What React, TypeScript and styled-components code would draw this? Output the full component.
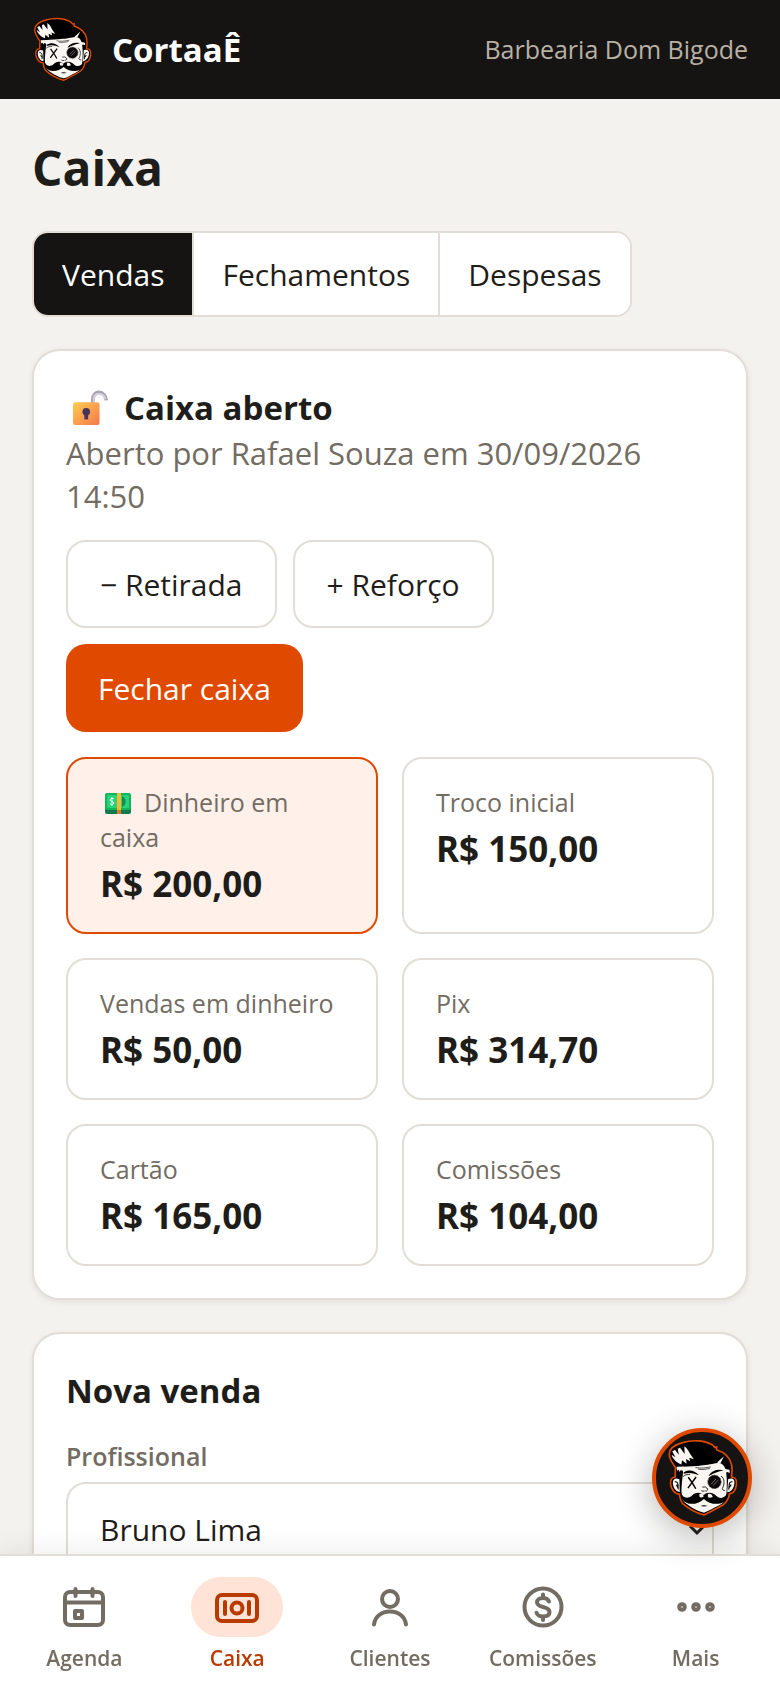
import React, { useState } from "react";
import styled, { createGlobalStyle, css } from "styled-components";

const colors = {
    bg: "#f4f2ee",
    dark: "#161412",
    text: "#1f1d19",
    muted: "#726c62",
    line: "#e2ddd7",
    accent: "#e04a00",
    accentDark: "#b83a00",
    accentSoft: "#ffe3d6",
    accentPale: "#fff0ea",
};

const tabs = ["Vendas", "Fechamentos", "Despesas"];

const stats = [
    { label: "Dinheiro em caixa", value: "R$ 200,00", cash: true },
    { label: "Troco inicial", value: "R$ 150,00" },
    { label: "Vendas em dinheiro", value: "R$ 50,00" },
    { label: "Pix", value: "R$ 314,70" },
    { label: "Cartão", value: "R$ 165,00" },
    { label: "Comissões", value: "R$ 104,00" },
];

const Face = () => (
    <svg viewBox="124 112 220 236" aria-hidden="true">
        <path
            d="M134 158C135 140 152 129 175 123C202 115 238 115 262 128C268 131 270 134 273 138L279 136L278 145C300 152 319 168 324 190C327 202 326 216 324 228C337 228 341 238 339 252C337 267 329 278 318 279C316 293 312 302 300 312C282 323 264 332 240 344C218 338 192 324 176 310C168 302 166 291 165 280C150 280 140 265 138 250C137 238 142 229 152 228L153 200C148 190 134 178 134 158Z"
            fill="#000"
            stroke={colors.accent}
            strokeWidth="5"
            strokeLinejoin="round"
        />
        {/* ears */}
        <path d="M165 235C151 229 144 236 145 248C147 264 155 273 166 274Z" fill="#faf7f2" />
        <path d="M314 234C328 229 335 236 333 248C331 264 323 273 311 275Z" fill="#faf7f2" />
        <path d="M151 243C159 241 162 246 161 266M156 252L160 260M327 243C319 241 316 247 316 267M323 251L318 260" fill="none" stroke="#000" strokeWidth="3.5" />
        {/* face */}
        <path d="M174 197C195 194 214 196 237 192C257 190 276 185 285 185C300 186 306 200 308 214C311 240 310 266 308 287C306 301 298 309 284 316C269 323 254 333 240 337C222 333 199 320 185 309C175 302 173 293 172 281C170 264 174 234 176 214Z" fill="#faf7f2" />
        <path d="M156 197L178 196L175 210L169 207L166 213L163 206L158 209ZM301 203L318 206L319 216L311 213L303 217ZM280 184L301 165L290 187Z" fill="#faf7f2" />
        {/* hair highlights */}
        <path d="M143 150L151 145L163 160L160 142L167 139L181 158L180 134C188 138 194 150 198 158L209 174L195 169L198 180L185 173L187 188L173 177L171 190C156 184 144 172 141 160L153 168Z" fill="#faf7f2" />
        <path d="M214 199C230 203 245 200 261 197M222 204C235 207 246 204 258 202" fill="none" stroke="#000" strokeWidth="2" />
        {/* brows and eyes */}
        <path d="M178 214C193 204 211 207 225 223C211 216 194 213 178 218ZM255 223C264 209 280 203 300 208C284 211 270 216 255 225Z" />
        <path d="M192 229Q204 244 215 264M216 228Q202 247 191 262" fill="none" stroke="#000" strokeWidth="4.5" />
        <path d="M176 227C180 221 191 220 198 220M292 225C303 232 304 249 296 264Q298 271 304 269" fill="none" stroke="#000" strokeWidth="2.5" />
        <circle cx="272" cy="243" r="20" fill="#0c0b0a" />
        <circle cx="272" cy="243" r="20" fill="none" stroke="#000" strokeWidth="3" strokeDasharray="3 2" />
        <path d="M262 250L277 234M268 254L283 238" stroke="#aaa7a2" strokeWidth="1.8" />
        {/* nose and moustache */}
        <path d="M232 270Q237 273 242 271M250 262C253 267 250 272 244 271M235 259Q246 256 250 263" fill="none" stroke="#000" strokeWidth="2.5" />
        <path d="M171 277C174 291 189 296 202 286C213 274 228 273 239 283C251 273 266 274 278 286C290 297 306 292 311 277C314 294 304 309 283 310C265 311 252 306 240 295C227 306 214 311 199 310C179 308 168 294 171 277Z" />
        <path d="M226 280Q237 275 239 288Q231 294 226 288ZM252 280Q263 276 267 289Q258 293 252 290Z" fill="#faf7f2" />
        <path d="M229 317Q240 312 251 317Q240 320 229 317Z" />
    </svg>
);

const PadlockIcon = () => (
    <svg viewBox="0 0 40 40" aria-hidden="true">
        <defs>
            <linearGradient id="lockBody" x1="0" y1="0" x2="1" y2="1">
                <stop offset="0" stopColor="#ffcd4d" />
                <stop offset="1" stopColor="#f5774f" />
            </linearGradient>
        </defs>
        <path d="M22 15V11C22 1 35 1 36 12" fill="none" stroke="#aaa3b2" strokeWidth="4" />
        <path d="M23 14V10C24 3 34 4 35 11" fill="none" stroke="#d6d0df" strokeWidth="2" />
        <rect x="1" y="14" width="28" height="24" rx="3" fill="url(#lockBody)" />
        <circle cx="15" cy="24" r="4" fill="#46345c" />
        <path d="M13 25H17L17 32H13Z" fill="#46345c" />
    </svg>
);

const CashIcon = () => (
    <svg viewBox="0 0 32 32" aria-hidden="true">
        <rect x="3" y="8" width="26" height="18" rx="2" fill="#127a4c" />
        <rect x="3" y="5" width="26" height="17" rx="2" fill="#13b45c" />
        <rect x="5" y="7" width="22" height="13" rx="1" fill="#25d47a" />
        <path d="M20 8A6 6 0 0 1 20 19Z" fill="#138b53" />
        <path d="M12 10.5Q8 9.500 8 12Q8 13 10 13.500Q12 14 12 15Q11 17.500 8 16M10 9V18" fill="none" stroke="#e8fff1" strokeWidth="1" />
        <rect x="15" y="5" width="4" height="17" fill="#ffb82e" />
        <rect x="15" y="22" width="4" height="4" fill="#d97b2c" />
    </svg>
);

const AgendaIcon = () => (
    <NavSvg>
        <rect x="5" y="9" width="38" height="33" rx="5" />
        <path d="M5 19.500H43M15.500 6V13M32.500 6V13" />
        <rect x="15" y="28" width="7" height="7" />
    </NavSvg>
);

const CaixaIcon = () => (
    <NavSvg>
        <rect x="4" y="12" width="40" height="26" rx="5" />
        <circle cx="24" cy="25" r="5.500" />
        <path d="M12 19V31M36 19V31" />
    </NavSvg>
);

const ClientesIcon = () => (
    <NavSvg>
        <circle cx="24" cy="16" r="8" />
        <path d="M8 41.500C9 33.500 15.500 28.500 24 28.500S39 33.500 40 41.500" />
    </NavSvg>
);

const ComissoesIcon = () => (
    <NavSvg>
        <circle cx="24" cy="24" r="18.500" />
        <path d="M30 18.500C29 16 27 15 24 15C20 15 18 17 18 19.300C18 22.500 21 23.300 24 24C27 24.700 30.500 25.800 30.500 29C30.500 32 28 33.500 24 33.500C21 33.500 18 32 17.500 29.700M24 11.500V15M24 33.500V37" />
    </NavSvg>
);

const MaisIcon = () => (
    <NavSvg>
        <circle cx="10" cy="24" r="2.800" />
        <circle cx="24" cy="24" r="2.800" />
        <circle cx="38" cy="24" r="2.800" />
    </NavSvg>
);

const navItems = [
    { label: "Agenda", icon: AgendaIcon },
    { label: "Caixa", icon: CaixaIcon, active: true },
    { label: "Clientes", icon: ClientesIcon },
    { label: "Comissões", icon: ComissoesIcon },
    { label: "Mais", icon: MaisIcon },
];

export default function App() {
    const [tab, setTab] = useState("Vendas");

    return (
        <>
            <GlobalStyle />
            <Header>
                <Logo>
                    <Face />
                </Logo>
                <Brand>CortaaÊ</Brand>
                <ShopName>Barbearia Dom Bigode</ShopName>
            </Header>

            <Main>
                <PageTitle>Caixa</PageTitle>
                <Tabs>
                    {tabs.map((name) => (
                        <Tab key={name} type="button" $active={tab === name} onClick={() => setTab(name)}>
                            {name}
                        </Tab>
                    ))}
                </Tabs>

                <Card>
                    <CardTitle>
                        <TitleIcon>
                            <PadlockIcon />
                        </TitleIcon>
                        Caixa aberto
                    </CardTitle>
                    <OpenedBy>Aberto por Rafael Souza em 30/09/2026 14:50</OpenedBy>
                    <Actions>
                        <Button type="button">− Retirada</Button>
                        <Button type="button">+ Reforço</Button>
                        <Button type="button" $primary>
                            Fechar caixa
                        </Button>
                    </Actions>
                    <Stats>
                        {stats.map((item) => (
                            <Stat key={item.label} $highlight={item.cash}>
                                <StatLabel>
                                    {item.cash && (
                                        <LabelIcon>
                                            <CashIcon />
                                        </LabelIcon>
                                    )}
                                    {item.label}
                                </StatLabel>
                                <StatValue>{item.value}</StatValue>
                            </Stat>
                        ))}
                    </Stats>
                </Card>

                <Card>
                    <CardTitle>Nova venda</CardTitle>
                    <Field>
                        <Label htmlFor="profissional">Profissional</Label>
                        <SelectBox>
                            <Select id="profissional">
                                <option>Bruno Lima</option>
                            </Select>
                            <Chevron viewBox="0 0 18 12" aria-hidden="true">
                                <path d="M2 2L9 9L16 2" />
                            </Chevron>
                        </SelectBox>
                    </Field>
                </Card>
            </Main>

            <BottomNav>
                {navItems.map(({ label, icon: Icon, active }) => (
                    <NavLink key={label} href="#" $active={active}>
                        <NavPill $active={active}>
                            <Icon />
                        </NavPill>
                        {label}
                    </NavLink>
                ))}
            </BottomNav>

            <ChatButton type="button" aria-label="Assistente">
                <Face />
            </ChatButton>
        </>
    );
}

const GlobalStyle = createGlobalStyle`
  * {
    box-sizing: border-box;
  }

  body {
    margin: 0;
    background: ${colors.bg};
    color: ${colors.text};
    font-family: "Open Sans", "Noto Sans", sans-serif;
    font-size: 30px;
  }

  h1, h2, p {
    margin: 0;
  }

  button, select {
    font: inherit;
    color: inherit;
    cursor: pointer;
  }
`;

const Header = styled.header`
  display: flex;
  align-items: center;
  height: 99px;
  padding: 0 32px;
  background: ${colors.dark};
`;

const Logo = styled.div`
  width: 60px;
  margin-right: 20px;

  svg {
    display: block;
    width: 100%;
  }
`;

const Brand = styled.strong`
  color: #fff;
  font-size: 33px;
  line-height: 48px;
`;

const ShopName = styled.span`
  margin-left: auto;
  color: #b8b1a6;
  font-size: 25px;
  line-height: 35px;
`;

const Main = styled.main`
  padding: 32px;
`;

const PageTitle = styled.h1`
  margin-bottom: 26px;
  font-size: 48px;
  line-height: 74px;
`;

const Tabs = styled.div`
  display: inline-flex;
  margin-bottom: 32px;
  vertical-align: top;
  background: #fff;
  border: 2px solid ${colors.line};
  border-radius: 16px;
  overflow: hidden;
`;

const Tab = styled.button<{ $active?: boolean }>`
  height: 82px;
  padding: 0 28px;
  border: 0;
  background: ${({ $active }) => ($active ? colors.dark : "#fff")};
  color: ${({ $active }) => ($active ? "#fff" : colors.text)};

  & + & {
    border-left: 2px solid ${colors.line};
  }
`;

const Card = styled.section`
  padding: 32px;
  background: #fff;
  border: 2px solid ${colors.line};
  border-radius: 28px;
  box-shadow: 0 2px 6px rgba(22, 20, 18, 0.08);

  & + & {
    margin-top: 32px;
  }
`;

const CardTitle = styled.h2`
  display: flex;
  align-items: center;
  font-size: 33px;
  line-height: 49px;
`;

const TitleIcon = styled.span`
  display: flex;
  width: 38px;
  margin: 0 14px 0 6px;

  svg {
    width: 100%;
  }
`;

const OpenedBy = styled.p`
  margin-bottom: 22px;
  color: ${colors.muted};
  font-size: 31px;
  line-height: 43px;
`;

const Actions = styled.div`
  display: flex;
  flex-wrap: wrap;
  gap: 16px;
  margin-bottom: 25px;
`;

const Button = styled.button<{ $primary?: boolean }>`
  height: 88px;
  padding: 0 32px;
  background: #fff;
  border: 2px solid ${colors.line};
  border-radius: 20px;

  ${({ $primary }) =>
    $primary &&
    css`
      background: ${colors.accent};
      border: 0;
      color: #fff;
    `}
`;

const Stats = styled.div`
  display: grid;
  grid-template-columns: 1fr 1fr;
  gap: 24px;
`;

const Stat = styled.div<{ $highlight?: boolean }>`
  padding: 26px 32px;
  background: ${({ $highlight }) => ($highlight ? colors.accentPale : "#fff")};
  border: 2px solid ${({ $highlight }) => ($highlight ? colors.accent : colors.line)};
  border-radius: 20px;
`;

const StatLabel = styled.p`
  margin-bottom: 4px;
  color: ${colors.muted};
  font-size: 25px;
  line-height: 35px;
`;

const LabelIcon = styled.span`
  display: inline-block;
  width: 32px;
  height: 35px;
  margin: 0 10px 0 2px;
  padding-top: 3px;
  vertical-align: top;
  line-height: 0;
`;

const StatValue = styled.p`
  padding-top: 2px;
  font-size: 35px;
  font-weight: 700;
  line-height: 45px;
`;

const Field = styled.div`
  display: flex;
  flex-direction: column;
  gap: 8px;
  margin-top: 24px;
`;

const Label = styled.label`
  color: ${colors.muted};
  font-size: 25px;
  font-weight: 600;
  line-height: 35px;
`;

const SelectBox = styled.div`
  position: relative;
`;

const Select = styled.select`
  width: 100%;
  height: 94px;
  padding: 0 32px;
  appearance: none;
  background: #fff;
  border: 2px solid ${colors.line};
  border-radius: 20px;
`;

const Chevron = styled.svg`
  position: absolute;
  right: 8px;
  bottom: 40px;
  width: 18px;
  fill: none;
  stroke: ${colors.text};
  stroke-width: 3;
  pointer-events: none;
`;

const BottomNav = styled.nav`
  position: fixed;
  right: 0;
  bottom: 0;
  left: 0;
  display: grid;
  grid-template-columns: repeat(5, 1fr);
  padding: 21px 8px 15px;
  background: #fff;
  border-top: 2px solid ${colors.line};
  box-shadow: 0 -4px 24px rgba(22, 20, 18, 0.08);
`;

const NavLink = styled.a<{ $active?: boolean }>`
  display: flex;
  flex-direction: column;
  align-items: center;
  gap: 6px;
  color: ${({ $active }) => ($active ? colors.accentDark : colors.muted)};
  font-size: 21px;
  font-weight: 600;
  line-height: 30px;
  text-decoration: none;
`;

const NavPill = styled.span<{ $active?: boolean }>`
  display: flex;
  align-items: center;
  justify-content: center;
  width: 92px;
  height: 60px;
  border-radius: 30px;
  background: ${({ $active }) => ($active ? colors.accentSoft : "transparent")};
`;

const NavSvg = styled.svg.attrs({ viewBox: "0 0 48 48", "aria-hidden": true })`
  width: 48px;
  height: 48px;
  fill: none;
  stroke: currentColor;
  stroke-width: 4;
  stroke-linecap: round;
  stroke-linejoin: round;
`;

const ChatButton = styled.button`
  position: fixed;
  right: 28px;
  bottom: 160px;
  display: flex;
  align-items: center;
  justify-content: center;
  width: 100px;
  height: 100px;
  padding: 0;
  background: ${colors.dark};
  border: 4px solid ${colors.accent};
  border-radius: 50%;
  box-shadow: 0 8px 36px rgba(22, 20, 18, 0.3);

  svg {
    width: 72px;
  }
`;
